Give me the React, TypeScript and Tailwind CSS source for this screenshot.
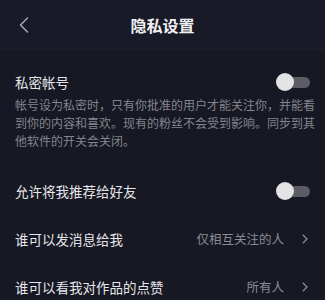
import { ChevronLeft } from 'lucide-react';

function Toggle() {
  return (
    <div className="relative flex h-[18px] w-[34px] items-center">
      <div className="ml-[4px] h-[11px] w-[30px] rounded-full bg-[#5b5c64]" />
      <div className="absolute left-0 top-0 h-[18px] w-[18px] rounded-full bg-[#e3e3e6]" />
    </div>
  );
}

function SwitchRow({ label }: { label: string }) {
  return (
    <div className="flex h-[48px] items-center justify-between">
      <span className="text-[13.5px] text-[#e6e6e9]">{label}</span>
      <Toggle />
    </div>
  );
}

function LinkRow({ label, value }: { label: string; value: string }) {
  return (
    <div className="flex h-[48px] items-center justify-between">
      <span className="text-[13.5px] text-[#e6e6e9]">{label}</span>
      <span className="flex items-center gap-[18px] text-[12.5px] text-[#8b8c93]">
        {value}
        <svg width="6" height="10" viewBox="0 0 6 10" fill="none" className="mr-[2px]">
          <polyline points="0.8,0.8 5,5 0.8,9.2" stroke="#8b8c93" strokeWidth="1.3" />
        </svg>
      </span>
    </div>
  );
}

export default function App() {
  return (
    <div
      className="h-[300px] w-[325px] overflow-hidden bg-[#161823]"
      style={{ fontFamily: '"Noto Sans CJK SC", "Noto Sans", sans-serif' }}
    >
      <header className="grid h-[50px] grid-cols-[1fr_auto_1fr] items-center border-b border-[#1e2030] bg-[#181a27] px-[10px]">
        <ChevronLeft size={28} strokeWidth={1.3} className="text-[#a4a5ad]" />
        <h1 className="text-[16px] font-bold text-[#f0f0f2]">隐私设置</h1>
        <div />
      </header>

      <section className="px-[15px] pt-[22px]">
        <div className="flex h-[20px] items-center justify-between">
          <span className="text-[13.5px] text-[#e6e6e9]">私密帐号</span>
          <Toggle />
        </div>
        <p className="mt-[4px] w-[300px] text-[12px] leading-[18px] text-[#84858c]">
          帐号设为私密时，只有你批准的用户才能关注你，并能看到你的内容和喜欢。现有的粉丝不会受到影响。同步到其他软件的开关会关闭。
        </p>

        <div className="mt-[17px]">
          <SwitchRow label="允许将我推荐给好友" />
          <LinkRow label="谁可以发消息给我" value="仅相互关注的人" />
          <LinkRow label="谁可以看我对作品的点赞" value="所有人" />
        </div>
      </section>
    </div>
  );
}
